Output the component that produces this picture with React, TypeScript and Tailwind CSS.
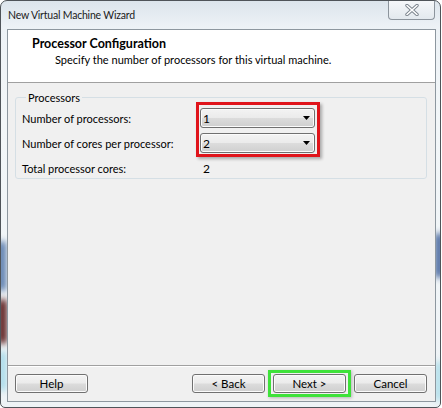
import type { ReactNode } from "react"

// Win7-style push button face
const buttonFace =
  "bg-[linear-gradient(#f3f3f3_0%,#ebebeb_48%,#dcdcdc_52%,#cfcfcf_100%)] border border-[#707070] rounded-[3px] shadow-[inset_0_0_0_1px_#fbfbfb]"

function WizardButton({ children }: { children: ReactNode }) {
  return (
    <button className={`h-[19px] w-[73px] ${buttonFace} text-[11.5px] leading-[15px] text-black`}>
      {children}
    </button>
  )
}

function DropDown({ value }: { value: string }) {
  return (
    <div className={`h-[20px] w-[115px] ${buttonFace} flex items-center justify-between pl-[2px] pr-[4px]`}>
      <span className="text-[12px] leading-[15px] text-black">{value}</span>
      <svg width="7" height="4" viewBox="0 0 7 4">
        <path d="M0 0 H7 L3.5 4 Z" fill="#000" />
      </svg>
    </div>
  )
}

function CloseGlyph() {
  return (
    <svg width="16" height="12" viewBox="0 0 16 12">
      <path d="M3 1.5 L13 10.5 M13 1.5 L3 10.5" stroke="#7a838c" strokeWidth="3.4" strokeLinecap="round" />
      <path d="M3 1.5 L13 10.5 M13 1.5 L3 10.5" stroke="#ffffff" strokeWidth="1.6" strokeLinecap="round" />
    </svg>
  )
}

export default function App() {
  return (
    <div className="w-[442px] h-[408px] bg-white font-['Lato',sans-serif] whitespace-nowrap">
      <div className="relative w-[441px] h-[408px] overflow-hidden rounded-t-[7px] rounded-b-[5px] border border-[#4f5459] bg-[linear-gradient(#dce5ec_0%,#edf2f6_26px,#f2f6f8_120px,#eef3f6_100%)] flex flex-col pl-[6px] pr-[4px] pb-[5px]">
        {/* desktop colours bleeding through the glass frame */}
        <span className="absolute left-[-3px] top-[240px] h-[50px] w-[8px] rounded-full bg-[#4f73a8] blur-[3px]" />
        <span className="absolute left-[-3px] top-[298px] h-[45px] w-[9px] rounded-full bg-[#5a1a1a] blur-[3px]" />
        <span className="absolute left-[-2px] top-[350px] h-[40px] w-[7px] rounded-full bg-[#9fd7e8] blur-[3px]" />
        <span className="absolute right-[-3px] top-[232px] h-[45px] w-[8px] rounded-full bg-[#3d5f99] blur-[3px]" />
        <span className="absolute right-[-2px] top-[360px] h-[40px] w-[7px] rounded-full bg-[#a9dbe8] blur-[3px]" />

        {/* Title bar */}
        <div className="relative flex h-[28px] items-start justify-between">
          <span className="mt-[7px] pl-[1px] text-[10.5px] leading-[15px] tracking-[-0.2px] text-[#1b1b1b]">New Virtual Machine Wizard</span>
          <div className="-mt-[1px] mr-[1px] flex h-[20px] w-[47px] items-center justify-center rounded-b-[4px] border border-t-0 border-[#8c949c] bg-[linear-gradient(#f6f8fa,#e3e9ee)]">
            <CloseGlyph />
          </div>
        </div>

        {/* Client area */}
        <div className="relative flex flex-1 flex-col border border-[#8d979f] bg-[#f0f0f0] text-[11px] leading-[15px] text-black">
          <div className="h-[53px] border-b border-[#a0a0a0] bg-white pt-[6px]">
            <div className="pl-[24px] text-[12.5px] font-bold leading-[16px]">Processor Configuration</div>
            <div className="pl-[47px] text-[11px] leading-[16px]">
              Specify the number of processors for this virtual machine.
            </div>
          </div>

          <div className="flex-1 px-[7px] pr-[8px] pt-[7px]">
            <fieldset className="rounded-[3px] border border-[#d5dfe5] pb-[2px] pl-[6px]">
              <legend className="ml-[4px] px-[2px]">Processors</legend>
              <div className="flex">
                <div className="flex w-[174px] flex-col">
                  <span className="mt-[6px]">Number of processors:</span>
                  <span className="mt-[10px]">Number of cores per processor:</span>
                  <span className="mt-[10px]">Total processor cores:</span>
                </div>
                <div className="flex flex-col">
                  <div className="-mt-[3px] flex w-[124px] flex-col gap-[5px] border-[3px] border-[#e0141b] pb-[1px] pl-[1px] pt-[3px] shadow-[2px_2px_3px_rgba(0,0,0,0.3)]">
                    <DropDown value="1" />
                    <DropDown value="2" />
                  </div>
                  <span className="ml-[7px] mt-[4px] text-[12px]">2</span>
                </div>
              </div>
            </fieldset>
          </div>

          {/* Footer buttons */}
          <div className="flex h-[36px] items-center border-t border-[#a0a0a0] pl-[7px] pr-[8px] shadow-[inset_0_1px_0_#ffffff]">
            <WizardButton>Help</WizardButton>
            <div className="ml-auto mr-[3px]">
              <WizardButton>&lt; Back</WizardButton>
            </div>
            <div className="mr-[3px] border-[3px] border-[#3ee23a] px-[2px] py-[1px] shadow-[1px_1px_3px_rgba(0,0,0,0.25)]">
              <WizardButton>Next &gt;</WizardButton>
            </div>
            <WizardButton>Cancel</WizardButton>
          </div>
        </div>
      </div>
    </div>
  )
}
